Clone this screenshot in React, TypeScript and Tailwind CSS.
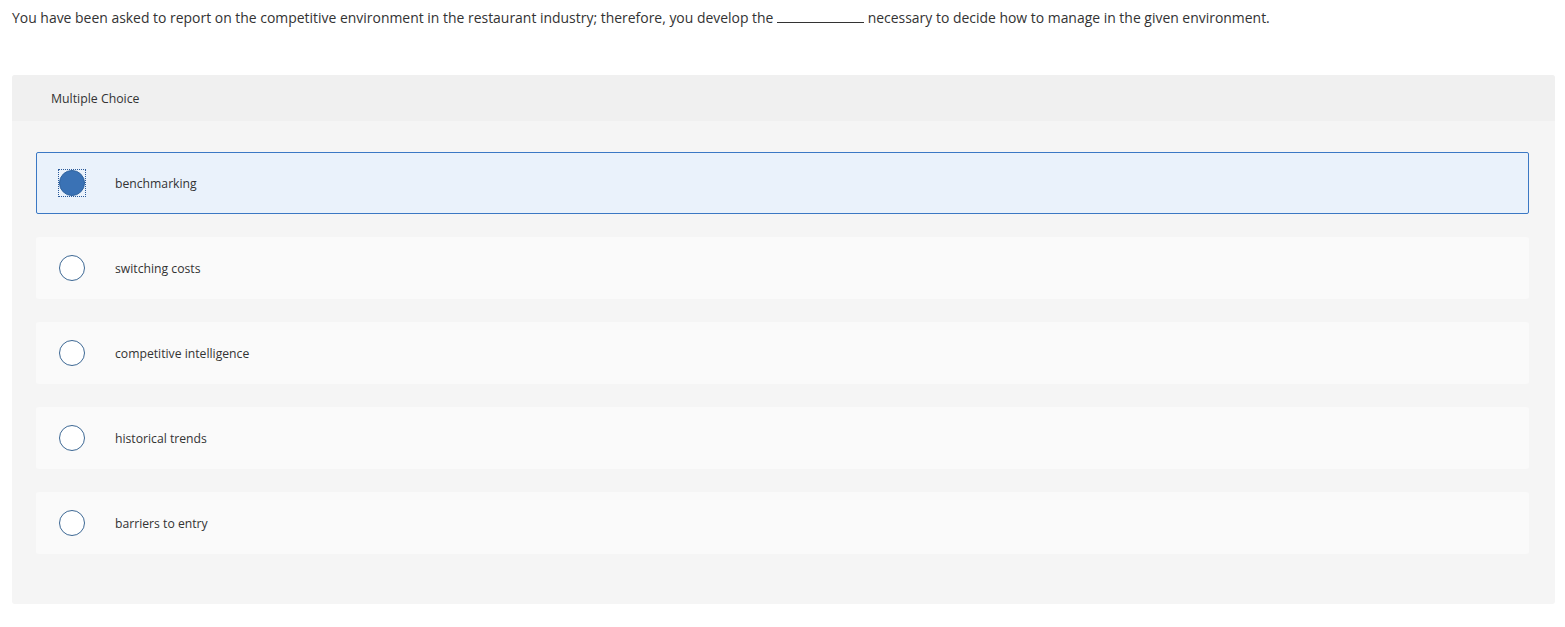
import React from "react";

const options = [
  "benchmarking",
  "switching costs",
  "competitive intelligence",
  "historical trends",
  "barriers to entry",
];

export default function App() {
  return (
    <div
      className="w-[1565px] h-[627px] bg-white text-[#333333]"
      style={{ fontFamily: "'Open Sans', Lato, sans-serif" }}
    >
      <p className="pl-[12px] pt-[9px] text-[13.95px] leading-[18px]">
        You have been asked to report on the competitive environment in the restaurant industry; therefore, you develop the{" "}
        <span className="inline-block w-[87px] border-b border-[#333333] align-baseline"></span>{" "}
        necessary to decide how to manage in the given environment.
      </p>
      <div className="mx-[12px] mt-[48px] w-[1543px] rounded-[3px] bg-[#f5f5f5] overflow-hidden">
        <div className="h-[46px] bg-[#f0f0f0] flex items-center pl-[39px] pt-[2px] text-[12.3px]">
          Multiple Choice
        </div>
        <div className="pt-[31px] pb-[50px] pl-[24px] pr-[26px] flex flex-col gap-[23px]">
          {options.map((o, i) => {
            const sel = i === 0;
            return (
              <div
                key={o}
                className={
                  sel
                    ? "h-[62px] rounded-[2px] border border-[#3b78c4] bg-[#eaf2fb] flex items-center pl-[22px]"
                    : "h-[62px] rounded-[3px] border border-transparent bg-[#fafafa] flex items-center pl-[22px]"
                }
              >
                {sel ? (
                  <div className="w-[28px] h-[28px] -ml-[1px] -mr-[1px] border border-dotted border-[#2a5a9a] flex items-center justify-center">
                    <div className="w-[26px] h-[26px] rounded-full bg-[#3a72b5] border border-[#2f639f]"></div>
                  </div>
                ) : (
                  <div className="w-[26px] h-[26px] rounded-full bg-white border-[1.5px] border-[#3d6894]"></div>
                )}
                <span className="ml-[30px] pt-[2px] text-[12.2px]">{o}</span>
              </div>
            );
          })}
        </div>
      </div>
    </div>
  );
}
